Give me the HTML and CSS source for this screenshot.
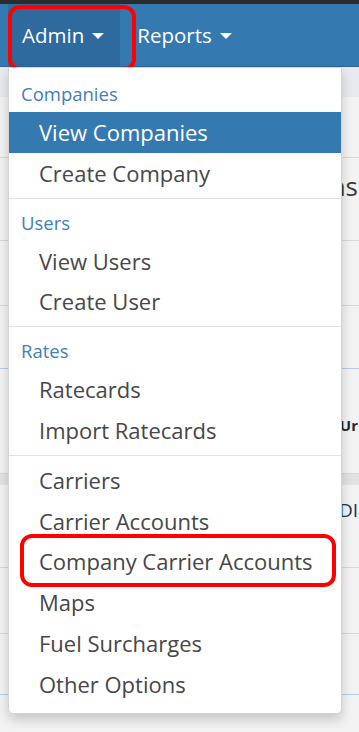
FILE: index.html
```html
<!DOCTYPE html>
<html lang="en">
<head>
    <meta charset="UTF-8">
    <meta name="viewport" content="width=device-width, initial-scale=1.0">
    <title>Admin Menu</title>
    <link rel="stylesheet" href="styles.css">
</head>
<body>
    <div class="topbar"></div>
    <nav class="navbar">
        <div class="nav-item active">
            Admin <span class="caret"></span>
            <span class="mark mark-admin"></span>
            <div class="dropdown">
                <div class="dropdown-header">Companies</div>
                <a class="dropdown-item selected">View Companies</a>
                <a class="dropdown-item">Create Company</a>
                <div class="divider"></div>
                <div class="dropdown-header">Users</div>
                <a class="dropdown-item">View Users</a>
                <a class="dropdown-item">Create User</a>
                <div class="divider"></div>
                <div class="dropdown-header">Rates</div>
                <a class="dropdown-item">Ratecards</a>
                <a class="dropdown-item">Import Ratecards</a>
                <div class="divider"></div>
                <a class="dropdown-item">Carriers</a>
                <a class="dropdown-item">Carrier Accounts</a>
                <a class="dropdown-item">Company Carrier Accounts<span class="mark mark-item"></span></a>
                <a class="dropdown-item">Maps</a>
                <a class="dropdown-item">Fuel Surcharges</a>
                <a class="dropdown-item">Other Options</a>
            </div>
        </div>
        <div class="nav-item">Reports <span class="caret"></span></div>
    </nav>
    <div class="page">
        <div class="band band-head"></div>
        <div class="row r1"></div>
        <div class="row r2"><span class="title">Options</span></div>
        <div class="row r3"></div>
        <div class="row r4 blue-line"></div>
        <div class="row r5"><span class="label">Ur</span></div>
        <div class="band band-mid"></div>
        <div class="row r6"><span class="sub">DI</span></div>
        <div class="row r7"></div>
        <div class="row r8 blue-line"></div>
    </div>
</body>
</html>
```

FILE: styles.css
```css
html,
body {
    height: 100%;
}

body {
    margin: 0;
    padding: 0;
    font-family: "Open Sans", Arial, sans-serif;
    background-color: #f3f3f3;
}

.topbar {
    height: 4px;
    background-color: #2b2b2b;
}

.navbar {
    display: flex;
    height: 62px;
    padding-left: 8px;
    background-color: #3579b1;
    border-bottom: 1px solid #2c6699;
}

.nav-item {
    position: relative;
    display: flex;
    align-items: center;
    padding: 0 16px 0 14px;
    color: #fff;
    font-size: 20.5px;
}

.nav-item + .nav-item {
    padding-left: 17px;
}

.nav-item.active {
    background-color: #2e6a9e;
}

.caret {
    display: inline-block;
    margin-left: 8px;
    margin-top: 2px;
    border-top: 6px solid #fff;
    border-left: 6px solid transparent;
    border-right: 6px solid transparent;
}

.mark {
    position: absolute;
    border: 4px solid #f00;
    border-radius: 12px;
    pointer-events: none;
}

.mark-admin {
    left: 0;
    top: 1px;
    right: -16px;
    bottom: -5px;
}

.mark-item {
    left: 11px;
    top: -7px;
    right: 5px;
    bottom: -5px;
}

.dropdown {
    position: absolute;
    top: 63px;
    left: 0;
    z-index: 10;
    width: 332px;
    padding: 6px 0 8px;
    background-color: #fff;
    border: 1px solid #d4d4d4;
    border-radius: 0 0 5px 5px;
    box-shadow: 0 6px 12px rgba(0, 0, 0, 0.18);
}

.dropdown-header {
    height: 38px;
    padding: 7px 12px 0;
    box-sizing: border-box;
    line-height: 26px;
    font-size: 18.5px;
    color: #3f80ba;
}

.dropdown-item {
    position: relative;
    display: block;
    padding: 6px 30px;
    line-height: 28.8px;
    font-size: 22px;
    color: #474747;
    white-space: nowrap;
}

.dropdown-item.selected {
    background-color: #3579b1;
    color: #fff;
}

.divider {
    height: 1px;
    margin: 4px 0;
    background-color: #e3e3e3;
}

.page {
    min-height: 700px;
    overflow: hidden;
}

.band-head {
    height: 30px;
    background-color: #e8eaed;
}

.band-mid {
    height: 11px;
    background-color: #e1e3e7;
}

.row {
    border-bottom: 1px solid #d8d8d8;
    white-space: nowrap;
    box-sizing: border-box;
    text-align: right;
    padding-right: 1px;
}

.row.blue-line {
    border-bottom-color: #b9cde2;
}

.r1 { height: 61px; }
.r2 { height: 83px; padding-top: 10px; }
.r3 { height: 65px; }
.r4 { height: 63px; }
.r5 { height: 105px; padding-top: 45px; }
.r6 { height: 83px; padding-top: 12px; }
.r7 { height: 66px; }
.r8 { height: 61px; }

.title {
    font-size: 26px;
    color: #3c3c3c;
}

.label {
    font-size: 15px;
    font-weight: bold;
    color: #1e2a3a;
}

.sub {
    font-size: 19px;
    color: #1f3552;
}
```
